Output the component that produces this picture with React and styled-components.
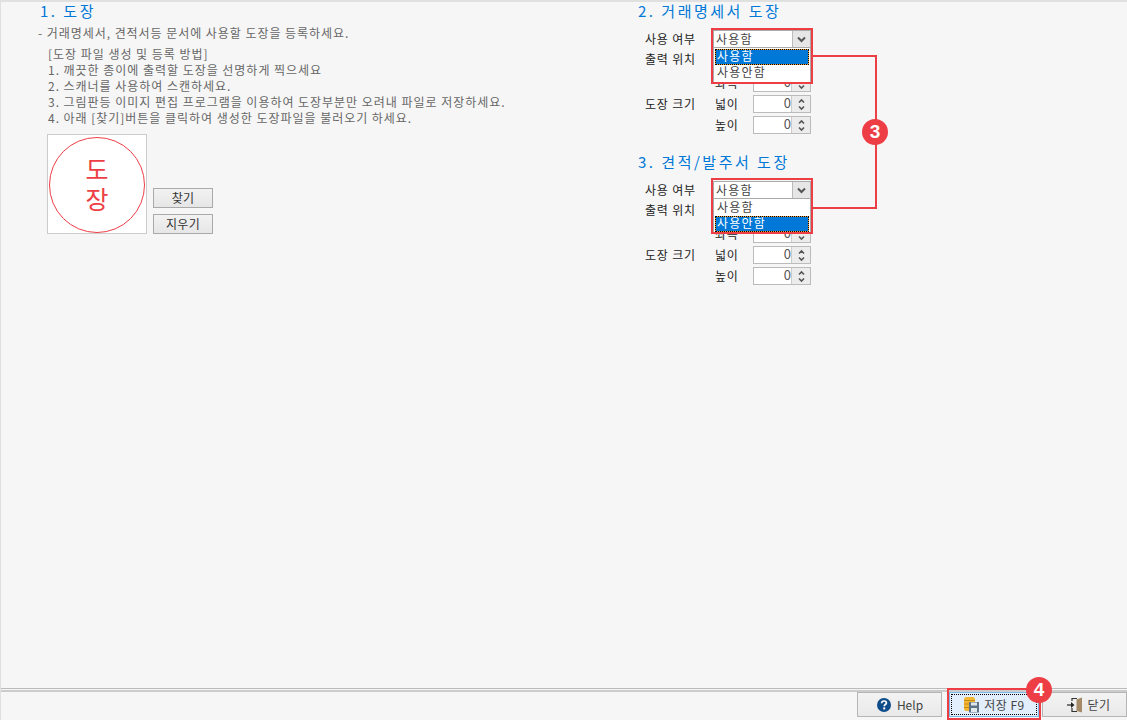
import React from 'react';
import styled, { createGlobalStyle } from 'styled-components';

const Global = createGlobalStyle`
  html, body { margin: 0; padding: 0; background: #f6f6f6; }
  * { box-sizing: border-box; }
`;

const RED = '#ee3e45';
const FONT = `"Noto Sans CJK KR", "Noto Sans", sans-serif`;

const Page = styled.div`
  position: relative;
  width: 1127px;
  height: 720px;
  overflow: hidden;
  display: flex;
  flex-direction: column;
  background: #f6f6f6;
  border-top: 2px solid #e0e0e0;
  border-left: 1px solid #e0e0e0;
  font-family: ${FONT};
  font-size: 12px;
  color: #444;
`;
const Main = styled.main`
  flex: 1;
  display: flex;
`;
const LeftColumn = styled.section`
  width: 637px;
  padding-left: 39px;
`;
const Title = styled.h2`
  margin: 0;
  height: 18px;
  font-size: 15px;
  line-height: 18px;
  font-weight: 400;
  letter-spacing: 2.5px;
  color: #0078d7;
  white-space: nowrap;
`;
const Description = styled.p`
  margin: 4px 0 0 -2px;
  height: 18px;
  line-height: 18px;
  letter-spacing: 0.95px;
  color: #666;
  white-space: nowrap;
`;
const Guide = styled.div`
  margin: 4px 0 0 8px;
  color: #666;
  letter-spacing: 0.97px;
  line-height: 16px;
  white-space: nowrap;
`;
const StampRow = styled.div`
  display: flex;
  align-items: flex-end;
  gap: 6px;
  margin: 8px 0 0 7px;
`;
const StampBox = styled.div`
  width: 100px;
  height: 100px;
  padding: 2px 2px 0 1px;
  background: #fff;
  border: 1px solid #ccc;
`;
const StampCircle = styled.div`
  width: 96px;
  height: 96px;
  padding-bottom: 5px;
  border: 1.5px solid ${RED};
  border-radius: 50%;
  display: flex;
  flex-direction: column;
  align-items: center;
  justify-content: center;
  color: ${RED};
  font-size: 25px;
  font-weight: 400;
  line-height: 30px;
`;
const StampActions = styled.div`
  display: flex;
  flex-direction: column;
  gap: 6px;
`;
const PlainButton = styled.button`
  width: 60px;
  height: 20px;
  padding: 0;
  border: 1px solid #aaa;
  background: linear-gradient(#f2f2f2, #e6e6e6);
  color: #333;
  font: 12px/16px ${FONT};
  letter-spacing: 0.3px;
`;
const RightColumn = styled.section`
  flex: 1;
  display: flex;
  flex-direction: column;
  gap: 19px;
`;
const SettingGroup = styled.div`
  width: 300px;
`;
const Form = styled.div`
  margin: 10px 0 0 7px;
  display: grid;
  grid-template-columns: 70px 38px 58px;
  grid-template-rows: 20px;
  grid-auto-rows: 18px;
  row-gap: 3px;
  align-items: center;
  color: #222;
  letter-spacing: 0.8px;
  line-height: 18px;
`;
const ComboRow = styled.div`
  grid-column: 1 / -1;
  align-self: start;
  display: flex;
  align-items: center;
`;
const RowLabel = styled.span`
  width: 68px;
  white-space: nowrap;
`;
const RaisedLabel = styled.span`
  margin-top: -6px;
  white-space: nowrap;
`;
const Combo = styled.div`
  width: 98px;
  height: 18px;
  display: flex;
  background: #fff;
  border: 1px solid #aaa;
  padding-left: 2px;
  color: #444;
  line-height: 15px;
  letter-spacing: 1.2px;
`;
const ComboValue = styled.span`
  flex: 1;
`;
const ComboArrow = styled.span`
  width: 18px;
  background: #e6e6e6;
  border-left: 1px solid #bbb;
  display: flex;
  align-items: center;
  justify-content: center;
`;
const Spin = styled.div`
  width: 58px;
  height: 18px;
  display: flex;
  background: #fff;
  border: 1px solid #bbb;
`;
const SpinValue = styled.span`
  flex: 1;
  text-align: right;
  padding-right: 0;
  color: #555;
  font-size: 13px;
  line-height: 13px;
  letter-spacing: 0;
`;
const SpinArrows = styled.span`
  width: 19px;
  background: #ececec;
  border-left: 1px solid #ccc;
  display: flex;
  align-items: center;
  justify-content: center;
`;
const DropList = styled.ul`
  position: absolute;
  left: ${p => p.$x}px;
  top: ${p => p.$y}px;
  width: 98px;
  height: 36px;
  margin: 0;
  padding: 1px;
  list-style: none;
  background: #fff;
  border: 1px solid #aaa;
  color: #444;
  letter-spacing: 1.2px;
`;
const DropItem = styled.li`
  height: 16px;
  line-height: 14px;
  padding-left: 2px;
  ${p => p.$selected && `
    background: #0078d7;
    color: #fff;
    outline: 1px dotted #000;
    outline-offset: -1px;
    box-shadow: inset 0 0 0 1px #f0a030;
  `}
`;
const RedBox = styled.div`
  position: absolute;
  left: ${p => p.$x}px;
  top: ${p => p.$y}px;
  width: ${p => p.$w}px;
  height: ${p => p.$h}px;
  border: 2px solid ${RED};
  pointer-events: none;
`;
const Wire = styled.div`
  position: absolute;
  left: ${p => p.$x}px;
  top: ${p => p.$y}px;
  width: ${p => p.$w}px;
  height: ${p => p.$h}px;
  background: ${RED};
`;
const Badge = styled.div`
  position: absolute;
  left: ${p => p.$x}px;
  top: ${p => p.$y}px;
  width: 26px;
  height: 26px;
  border-radius: 50%;
  background: ${RED};
  color: #fff;
  font: 700 19px/26px "Liberation Sans", sans-serif;
  text-align: center;
`;
const Footer = styled.footer`
  height: 32px;
  border-top: 1px solid #bbb;
  display: flex;
  flex-direction: column;
`;
const FooterRule = styled.div`
  height: 2px;
  margin-top: 1px;
  background: #ccc;
`;
const FooterActions = styled.div`
  display: flex;
  justify-content: flex-end;
  gap: 7px;
`;
const ActionButton = styled.button`
  width: ${p => p.$w}px;
  height: 25px;
  margin-right: ${p => p.$mr || 0}px;
  padding: 0 0 0 ${p => p.$pl || 0}px;
  display: flex;
  align-items: center;
  justify-content: center;
  gap: 4px;
  border: 1px solid ${p => (p.$active ? '#7db8e8' : '#b5b5b5')};
  background: ${p => (p.$active ? '#e2eefb' : 'linear-gradient(#f3f3f3, #e9e9e9)')};
  color: #444;
  font: 12px/16px ${FONT};
  letter-spacing: ${p => p.$spacing ?? 0.5}px;
  ${p => p.$active && `outline: 1px dotted #000; outline-offset: -3px;`}
`;

const Chevron = () => (
  <svg width="9" height="7" viewBox="0 0 9 7"><path d="M1 1.5 L4.5 5 L8 1.5" fill="none" stroke="#555" strokeWidth="2" /></svg>
);
const SpinIcon = () => (
  <svg width="7" height="13" viewBox="0 0 7 13"><path d="M1 4.5 L3.5 2 L6 4.5 M1 8.5 L3.5 11 L6 8.5" fill="none" stroke="#555" strokeWidth="1.6" /></svg>
);
const HelpIcon = () => (
  <svg width="16" height="16" viewBox="0 0 16 16" style={{ marginRight: 1 }}>
    <circle cx="8" cy="8" r="7" fill="#0f4c8a" />
    <path d="M5.6 6.2 C5.7 4.6 6.8 4 8 4 C9.4 4 10.4 4.8 10.4 6 C10.4 7.5 8.2 7.6 8.2 9.2" fill="none" stroke="#fff" strokeWidth="1.7" />
    <rect x="7.2" y="10.4" width="2" height="2" fill="#fff" />
  </svg>
);
const SaveIcon = () => (
  <svg width="17" height="17" viewBox="0 0 17 17">
    <rect x="1" y="1" width="11" height="14" rx="2.5" fill="#f2b632" />
    <path d="M1 4.5 H12 M1 8 H6 M1 11.5 H6" stroke="#c98a12" strokeWidth="1" />
    <rect x="6" y="6" width="10" height="10.5" fill="#5f7286" />
    <rect x="8" y="6.5" width="6" height="3" fill="#dfe6ec" />
    <rect x="8" y="12" width="6" height="4" fill="#dfe6ec" />
  </svg>
);
const DoorIcon = () => (
  <svg width="17" height="16" viewBox="0 0 17 16">
    <path d="M6 4 V1.5 H11 M6 11 V14.5 H11" fill="none" stroke="#333" strokeWidth="1.2" />
    <path d="M1 8 H6" stroke="#333" strokeWidth="1.3" />
    <path d="M5 5 L8.5 8 L5 11 Z" fill="#222" />
    <path d="M10.5 2.5 L16 0.5 V15.5 L10.5 14 Z" fill="#a58a68" />
  </svg>
);

const SpinField = () => (
  <Spin>
    <SpinValue>0</SpinValue>
    <SpinArrows><SpinIcon /></SpinArrows>
  </Spin>
);

const Settings = ({ title }) => (
  <SettingGroup>
    <Title>{title}</Title>
    <Form>
      <ComboRow>
        <RowLabel>사용 여부</RowLabel>
        <Combo>
          <ComboValue>사용함</ComboValue>
          <ComboArrow><Chevron /></ComboArrow>
        </Combo>
      </ComboRow>
      <RaisedLabel>출력 위치</RaisedLabel><span>상단</span><SpinField />
      <span /><span>좌측</span><SpinField />
      <span>도장 크기</span><span>넓이</span><SpinField />
      <span /><span>높이</span><SpinField />
    </Form>
  </SettingGroup>
);

export default function App() {
  return (
    <Page>
      <Global />
      <Main>
        <LeftColumn>
          <Title>1. 도장</Title>
          <Description>- 거래명세서, 견적서등 문서에 사용할 도장을 등록하세요.</Description>
          <Guide>
            <div>[도장 파일 생성 및 등록 방법]</div>
            <div>1. 깨끗한 종이에 출력할 도장을 선명하게 찍으세요</div>
            <div>2. 스캐너를 사용하여 스캔하세요.</div>
            <div>3. 그림판등 이미지 편집 프로그램을 이용하여 도장부분만 오려내 파일로 저장하세요.</div>
            <div>4. 아래 [찾기]버튼을 클릭하여 생성한 도장파일을 불러오기 하세요.</div>
          </Guide>
          <StampRow>
            <StampBox>
              <StampCircle><span>도</span><span>장</span></StampCircle>
            </StampBox>
            <StampActions>
              <PlainButton>찾기</PlainButton>
              <PlainButton>지우기</PlainButton>
            </StampActions>
          </StampRow>
        </LeftColumn>
        <RightColumn>
          <Settings title="2. 거래명세서 도장" />
          <Settings title="3. 견적/발주서 도장" />
        </RightColumn>
      </Main>
      <Footer>
        <FooterRule />
        <FooterActions>
          <ActionButton $w={85} $spacing={0}><HelpIcon />Help</ActionButton>
          <ActionButton $w={90} $active $mr={-4}><SaveIcon />저장 F9</ActionButton>
          <ActionButton $w={85} $pl={8}><DoorIcon />닫기</ActionButton>
        </FooterActions>
      </Footer>

      <DropList $x={712} $y={45}>
        <DropItem $selected>사용함</DropItem>
        <DropItem>사용안함</DropItem>
      </DropList>
      <DropList $x={712} $y={196}>
        <DropItem>사용함</DropItem>
        <DropItem $selected>사용안함</DropItem>
      </DropList>
      <RedBox $x={710} $y={26} $w={102} $h={56} />
      <RedBox $x={710} $y={176} $w={102} $h={56} />
      <Wire $x={812} $y={53} $w={63} $h={2} />
      <Wire $x={874} $y={53} $w={2} $h={154} />
      <Wire $x={812} $y={205} $w={64} $h={2} />
      <Badge $x={861} $y={117}>3</Badge>
      <RedBox $x={946} $y={686} $w={94} $h={32} />
      <Badge $x={1025} $y={675}>4</Badge>
    </Page>
  );
}
